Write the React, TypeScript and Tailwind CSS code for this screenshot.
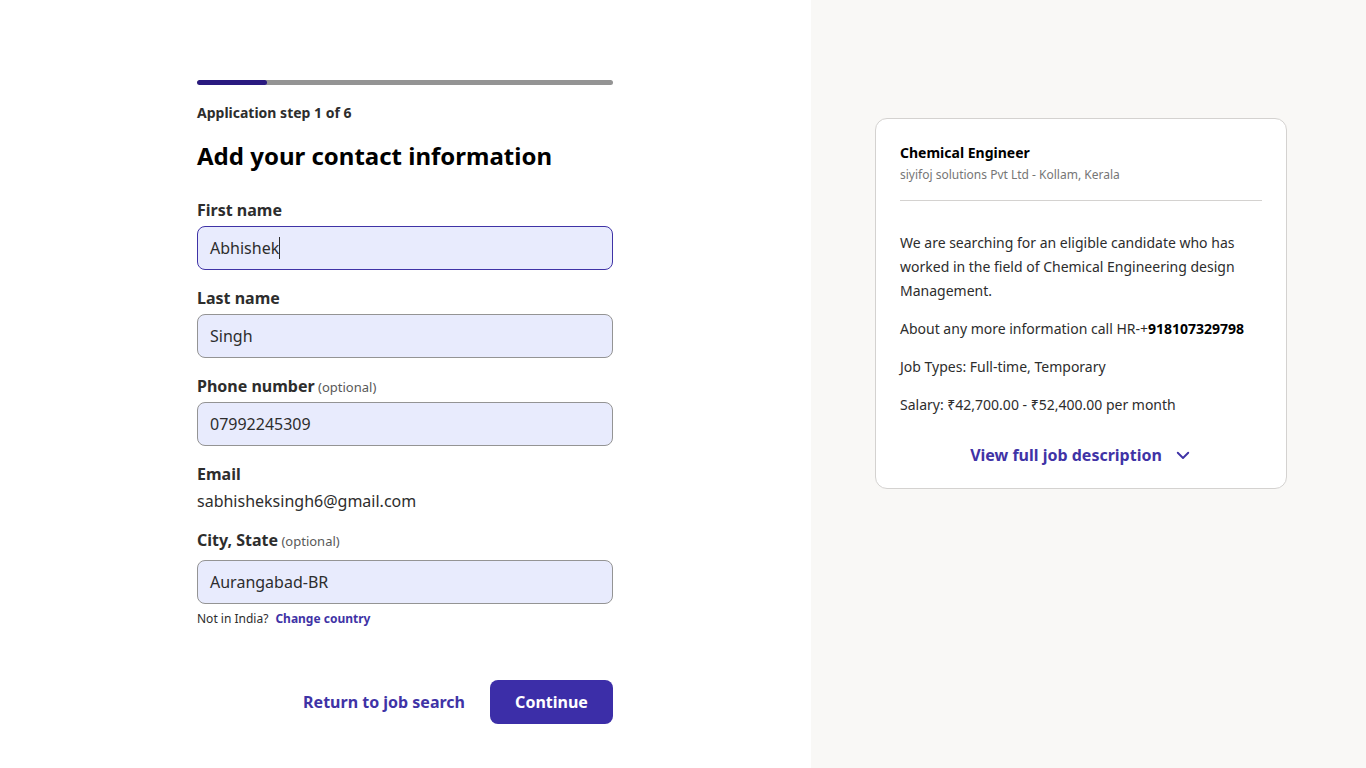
import React from "react";

const font = { fontFamily: '"Noto Sans", "Open Sans", sans-serif' };

interface FieldProps {
	label: string;
	value: string;
	optional?: boolean;
	focused?: boolean;
}

const Optional: React.FC = () => (
	<span className="text-[13px] leading-4 font-normal text-[#595959]"> (optional)</span>
);

const Field: React.FC<FieldProps> = ({ label, value, optional, focused }) => {
	return (
		<div className="mb-[16px]">
			<div className="h-6 text-[16px] font-bold text-[#2d2d2d] leading-6 mb-[4px]">
				{label}
				{optional && <Optional />}
			</div>
			<div
				className={
					"h-[44px] rounded-lg border bg-[#e8ebfd] px-[12px] flex items-center text-[16px] text-[#2d2d2d] " +
					(focused ? "border-[#3f33a6]" : "border-[#949494]")
				}
			>
				<span>{value}</span>
				{focused && <span className="w-px h-[22px] bg-[#2d2d2d]" />}
			</div>
		</div>
	);
};

const App: React.FC = () => {
	return (
		<div className="flex min-h-[927px] bg-white" style={font}>
			<div className="w-[811px] shrink-0 bg-white pt-[80px] pl-[197px]">
				<div className="w-[416px]">
					<div className="h-[5px] rounded-full bg-[#949494] overflow-hidden">
						<div className="h-full w-[70px] bg-[#2a1a80] rounded-full" />
					</div>
					<div className="mt-[18px] text-[14px] font-bold text-[#2d2d2d] leading-5">Application step 1 of 6</div>
					<h1 className="mt-[17px] text-[24px] font-bold text-black leading-8">Add your contact information</h1>
					<div className="mt-[26px]">
						<Field label="First name" value="Abhishek" focused />
						<Field label="Last name" value="Singh" />
						<Field label="Phone number" value="07992245309" optional />
						<div className="mb-[15px]">
							<div className="text-[16px] font-bold text-[#2d2d2d] leading-6">Email</div>
							<div className="text-[16px] text-[#2d2d2d] leading-6 mt-[3px]">sabhisheksingh6@gmail.com</div>
						</div>
						<div>
							<div className="h-6 text-[16px] font-bold text-[#2d2d2d] leading-6 mb-[8px]">
								City, State<Optional />
							</div>
							<div className="h-[44px] rounded-lg border border-[#949494] bg-[#e8ebfd] px-[12px] flex items-center text-[16px] text-[#2d2d2d]">
								Aurangabad-BR
							</div>
							<div className="mt-[7px] text-[12px] text-[#2d2d2d] leading-4">
								Not in India?
								<span className="ml-[7px] font-bold text-[#3f33a6]">Change country</span>
							</div>
						</div>
					</div>
					<div className="mt-[53px] flex items-center justify-end gap-[25px]">
						<button className="text-[16px] font-bold text-[#3f33a6]">Return to job search</button>
						<button className="h-[44px] w-[123px] rounded-lg bg-[#3c2ea8] text-white text-[16px] font-bold">Continue</button>
					</div>
				</div>
			</div>
			<div className="flex-1 bg-[#f9f8f6] pt-[118px] pl-[64px] pr-[64px]">
				<div className="w-[412px] rounded-xl border border-[#d4d2d0] bg-white px-[24px] pt-[24px] pb-[21px]">
					<div className="text-[14px] font-bold text-black leading-5">Chemical Engineer</div>
					<div className="text-[12px] text-[#767676] leading-4 mt-[4px]">siyifoj solutions Pvt Ltd - Kollam, Kerala</div>
					<div className="h-px bg-[#d4d2d0] mt-[17px]" />
					<div className="mt-[30px] text-[14px] text-[#2d2d2d] leading-6">
						<p>We are searching for an eligible candidate who has worked in the field of Chemical Engineering design Management.</p>
						<p className="mt-[14px]">About any more information call HR-+<b className="text-black">918107329798</b></p>
						<p className="mt-[14px]">Job Types: Full-time, Temporary</p>
						<p className="mt-[14px]">Salary: ₹42,700.00 - ₹52,400.00 per month</p>
					</div>
					<div className="mt-[26px] flex items-center justify-center gap-[12px] text-[16px] font-bold text-[#3f33a6] leading-6">
						<span>View full job description</span>
						<svg width="18" height="18" viewBox="0 0 24 24" fill="none" stroke="#3f33a6" strokeWidth="2.5" strokeLinecap="round" strokeLinejoin="round">
							<path d="M5 9l7 7 7-7" />
						</svg>
					</div>
				</div>
			</div>
		</div>
	);
};

export default App;
